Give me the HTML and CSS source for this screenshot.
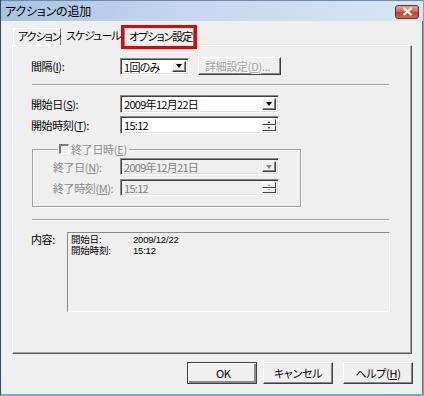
FILE: index.html
```html
<!DOCTYPE html>
<html lang="ja">
<head>
  <meta charset="UTF-8" />
  <title>アクションの追加</title>
  <link rel="stylesheet" href="styles.css">
</head>
<body>
  <div class="window">
    <div class="titlebar">
      <span class="title">アクションの追加</span>
      <span class="close">
        <svg width="11" height="9" viewBox="0 0 11 9"><path d="M1.5 1 L9.5 8 M9.5 1 L1.5 8" stroke="#fff" stroke-width="2.2" /></svg>
      </span>
    </div>

    <div class="client">
      <div class="tabs">
        <div class="tab first">アクション</div>
        <div class="tab active">スケジュール</div>
        <div class="tab marked">オプション設定</div>
      </div>

      <div class="panel">
        <div class="row r1">
          <span class="label">間隔(<u>I</u>):</span>
          <div class="field combo small">1回のみ<span class="drop"><i></i></span></div>
          <div class="btn disabled detail">詳細設定(<u>D</u>)...</div>
        </div>

        <div class="sep s1"></div>

        <div class="row r2">
          <span class="label">開始日(<u>S</u>):</span>
          <div class="field combo wide">2009年12月22日<span class="drop"><i></i></span></div>
        </div>
        <div class="row r3">
          <span class="label">開始時刻(<u>T</u>):</span>
          <div class="field wide">15:12<span class="spin"><b><i class="up"></i></b><b><i class="down"></i></b></span></div>
        </div>

        <fieldset class="group">
          <legend><span class="check"></span>終了日時(<u>E</u>)</legend>
          <div class="row g1">
            <span class="label">終了日(<u>N</u>):</span>
            <div class="field combo wide off">2009年12月21日<span class="drop"><i></i></span></div>
          </div>
          <div class="row g2">
            <span class="label">終了時刻(<u>M</u>):</span>
            <div class="field wide off">15:12<span class="spin"><b><i class="up"></i></b><b><i class="down"></i></b></span></div>
          </div>
        </fieldset>

        <div class="sep s2"></div>

        <div class="summary">
          <span class="label">内容:</span>
          <div class="summary-box">
            <span>開始日:</span><span>2009/12/22</span>
            <span>開始時刻:</span><span>15:12</span>
          </div>
        </div>
      </div>

      <div class="buttons">
        <div class="btn default">OK</div>
        <div class="btn">キャンセル</div>
        <div class="btn help">ヘルプ(<u>H</u>)</div>
      </div>
    </div>
  </div>
</body>
</html>
```

FILE: styles.css
```css
* {
  margin: 0;
  padding: 0;
  box-sizing: border-box;
}

body {
  width: 424px;
  height: 396px;
  background: #efefef;
  font-family: "Noto Sans CJK JP", "Noto Sans", sans-serif;
  font-size: 11px;
  color: #000;
  font-feature-settings: "palt";
  overflow: hidden;
}

u {
  text-decoration: underline;
  text-underline-offset: 1px;
}

.window {
  width: 424px;
  height: 396px;
  display: flex;
  flex-direction: column;
  border-left: 1px solid #3b4a5a;
  border-right: 1px solid #4fb9dc;
  border-bottom: 2px solid #4fb9dc;
  box-shadow: inset -1px 0 0 #5d6f82;
  background: #efefef;
}

/* Title bar */
.titlebar {
  height: 21px;
  display: flex;
  align-items: center;
  justify-content: space-between;
  padding: 0 4px 0 4px;
  background: linear-gradient(to right, #a9c3e2, #c5d8ee 45%, #d8e6f4);
  border-top: 1px solid #6e8aa8;
}

.title {
  font-size: 12px;
  line-height: 14px;
  letter-spacing: -0.2px;
}

.close {
  width: 24px;
  height: 14px;
  margin-top: 1px;
  display: flex;
  align-items: center;
  justify-content: center;
  border: 1px solid #6b2b22;
  border-radius: 3px;
  background: linear-gradient(#e7a596, #d0634f 50%, #b7412c 51%, #d46a52);
}

/* Client area */
.client {
  flex: 1;
  padding: 4px 0 0 11px;
}

.tabs {
  height: 20px;
  display: flex;
  align-items: flex-end;
  padding-left: 1px;
  position: relative;
  z-index: 2;
}

.tab {
  height: 17px;
  line-height: 15px;
  padding: 0 4px;
  border: 1px solid;
  border-color: #fff #7a7a7a transparent #fff;
  border-bottom: none;
  white-space: nowrap;
  letter-spacing: -1px;
}

.tab.first {
  width: 48px;
}

.tab.active {
  height: 21px;
  margin-bottom: -1px;
  width: 62px;
  padding: 2px 0 0 4px;
  background: #efefef;
  border-color: transparent;
}

.tab.marked {
  width: 70px;
  height: 18px;
  margin-left: 1px;
  margin-bottom: -1px;
  padding-left: 4px;
  border-left-color: #8a8a8a;
  outline: 3px solid #e8000b;
  background: #efefef;
}

.panel {
  width: 400px;
  height: 309px;
  border: 1px solid;
  border-color: #fff #5a5a5a #5a5a5a #fff;
  box-shadow: inset -1px -1px 0 #a0a0a0;
  padding: 11px 0 0 18px;
}

.row {
  display: flex;
  align-items: center;
  height: 18px;
}

.label {
  width: 89px;
  line-height: 14px;
  letter-spacing: -0.4px;
  white-space: nowrap;
}

.field {
  position: relative;
  height: 18px;
  background: #fff;
  border: 1px solid;
  border-color: #8a8a8a #fff #fff #8a8a8a;
  box-shadow: inset 1px 1px 0 #404040, inset -1px -1px 0 #dcdcdc;
  padding: 1px 0 0 3px;
  line-height: 14px;
  letter-spacing: -0.7px;
  white-space: nowrap;
}

.field.small {
  width: 69px;
  height: 17px;
}

.field.wide {
  width: 159px;
}

.field.off {
  background: #efefef;
  color: #7d7d7d;
  height: 17px;
}

.drop {
  position: absolute;
  top: 2px;
  right: 2px;
  bottom: 2px;
  width: 14px;
  display: flex;
  align-items: center;
  justify-content: center;
  background: #efefef;
  border: 1px solid;
  border-color: #fff #404040 #404040 #fff;
  box-shadow: inset -1px -1px 0 #8a8a8a;
}

.drop i {
  border-left: 3.5px solid transparent;
  border-right: 3.5px solid transparent;
  border-top: 4px solid #000;
}

.off .drop i {
  border-top-color: #8a8a8a;
}

.spin {
  position: absolute;
  top: 2px;
  right: 2px;
  bottom: 2px;
  width: 14px;
  display: flex;
  flex-direction: column;
}

.spin b {
  flex: 1;
  display: flex;
  align-items: center;
  justify-content: center;
  background: #efefef;
  border: 1px solid;
  border-color: #fff #404040 #404040 #fff;
}

.spin i {
  border-left: 1.5px solid transparent;
  border-right: 1.5px solid transparent;
}

.spin i.up {
  border-bottom: 2px solid #000;
}

.spin i.down {
  border-top: 2px solid #000;
}

.off .spin i.up {
  border-bottom-color: #8a8a8a;
}

.off .spin i.down {
  border-top-color: #8a8a8a;
}

.btn {
  height: 22px;
  display: flex;
  align-items: center;
  justify-content: center;
  background: #efefef;
  border: 1px solid;
  border-color: #fff #404040 #404040 #fff;
  box-shadow: inset -1px -1px 0 #8a8a8a;
  white-space: nowrap;
  letter-spacing: -0.3px;
}

.btn.detail {
  width: 83px;
  height: 18px;
  margin-left: 9px;
  justify-content: flex-start;
  padding-left: 6px;
}

.btn.disabled {
  color: #a0a0a0;
  text-shadow: 1px 1px 0 #fff;
}

.sep {
  width: 357px;
  height: 2px;
  margin-left: 1px;
  border-top: 1px solid #a0a0a0;
  border-bottom: 1px solid #fff;
}

.s1 { margin-top: 9px; }
.r2 { margin-top: 9px; }
.r3 { margin-top: 3px; }

.group {
  width: 269px;
  margin: 9px 0 0 1px;
  padding: 0 0 10px 20px;
  border: 1px solid #a0a0a0;
  box-shadow: inset 1px 1px 0 #fff, 1px 1px 0 #fff;
}

.group legend {
  margin-left: 5px;
  padding: 0 2px 0 1px;
  height: 12px;
  line-height: 12px;
  color: #8a8a8a;
  display: flex;
  align-items: center;
  letter-spacing: -0.3px;
}

.check {
  width: 10px;
  height: 10px;
  margin-right: 2px;
  border-top: 2px solid #7a7a7a;
  border-left: 2px solid #7a7a7a;
  border-right: 1px solid #fff;
  border-bottom: 1px solid #fff;
}

.group .label {
  width: 67px;
  color: #8a8a8a;
}

.group .row {
  height: 17px;
}

.g1 { margin-top: 3px; }
.g2 { margin-top: 4px; }

.s2 { margin-top: 12px; }

.summary {
  display: flex;
  margin-top: 11px;
}

.summary .label {
  width: 36px;
  line-height: 12px;
  padding-top: 1px;
}

.summary-box {
  width: 323px;
  height: 80px;
  border: 1px solid;
  border-color: #8a8a8a #fff #fff #8a8a8a;
  padding: 1px 0 0 3px;
  display: grid;
  grid-template-columns: 62px 1fr;
  grid-auto-rows: 11px;
  align-content: start;
  font-family: "Liberation Sans", "Noto Sans CJK JP", sans-serif;
  font-size: 9.5px;
  line-height: 11px;
  letter-spacing: -0.2px;
}

.buttons {
  display: flex;
  justify-content: flex-end;
  padding-right: 10px;
  margin-top: 8px;
}

.buttons .btn {
  width: 70px;
}

.btn.default {
  border-color: #404040;
  box-shadow: inset 1px 1px 0 #fff, inset -2px -2px 0 #8a8a8a;
  margin-right: 6px;
  justify-content: flex-start;
  padding-left: 28px;
}

.btn.help {
  margin-left: 10px;
}
```
